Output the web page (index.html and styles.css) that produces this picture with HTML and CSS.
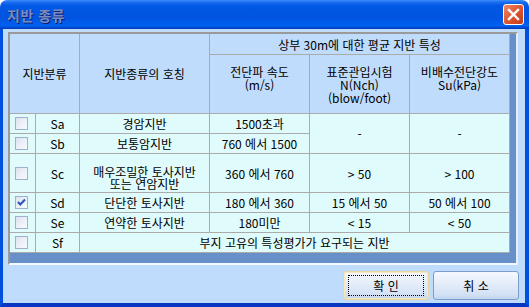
FILE: index.html
```html
<!DOCTYPE html>
<html lang="ko">
<head>
    <meta charset="UTF-8">
    <title>지반 종류</title>
    <link rel="stylesheet" href="styles.css">
</head>
<body>
    <div class="window">
        <div class="titlebar">
            <span class="title">지반 종류</span>
            <button class="close">
                <svg width="13" height="13" viewBox="0 0 13 13"><path d="M2 2 L11 11 M11 2 L2 11" stroke="#fff" stroke-width="2.4" stroke-linecap="square"/></svg>
            </button>
        </div>
        <div class="client">
            <div class="grid-frame">
                <div class="grid">
                    <!-- 헤더 -->
                    <div class="cell head h-class">지반분류</div>
                    <div class="cell head h-name">지반종류의 호칭</div>
                    <div class="cell head h-top">상부 30m에 대한 평균 지반 특성</div>
                    <div class="cell head h-sub">전단파 속도<br>(m/s)</div>
                    <div class="cell head h-sub">표준관입시험<br>N(Nch)<br>(blow/foot)</div>
                    <div class="cell head h-sub">비배수전단강도<br>Su(kPa)</div>

                    <!-- Sa -->
                    <div class="cell"><span class="chk"></span></div>
                    <div class="cell">Sa</div>
                    <div class="cell">경암지반</div>
                    <div class="cell">1500초과</div>
                    <div class="cell span-r2">-</div>
                    <div class="cell span-r2">-</div>

                    <!-- Sb -->
                    <div class="cell"><span class="chk"></span></div>
                    <div class="cell">Sb</div>
                    <div class="cell">보통암지반</div>
                    <div class="cell">760 에서 1500</div>

                    <!-- Sc -->
                    <div class="cell"><span class="chk"></span></div>
                    <div class="cell">Sc</div>
                    <div class="cell two-line">매우조밀한 토사지반<br>또는 연암지반</div>
                    <div class="cell">360 에서 760</div>
                    <div class="cell">&gt; 50</div>
                    <div class="cell">&gt; 100</div>

                    <!-- Sd -->
                    <div class="cell"><span class="chk checked"><svg width="11" height="11" viewBox="0 0 11 11"><path d="M2 5 L4.3 7.5 L9 2.5" fill="none" stroke="#2a55b8" stroke-width="2"/></svg></span></div>
                    <div class="cell">Sd</div>
                    <div class="cell">단단한 토사지반</div>
                    <div class="cell">180 에서 360</div>
                    <div class="cell">15 에서 50</div>
                    <div class="cell">50 에서 100</div>

                    <!-- Se -->
                    <div class="cell"><span class="chk"></span></div>
                    <div class="cell">Se</div>
                    <div class="cell">연약한 토사지반</div>
                    <div class="cell">180미만</div>
                    <div class="cell">&lt; 15</div>
                    <div class="cell">&lt; 50</div>

                    <!-- Sf -->
                    <div class="cell"><span class="chk"></span></div>
                    <div class="cell">Sf</div>
                    <div class="cell span-c4">부지 고유의 특성평가가 요구되는 지반</div>
                </div>
            </div>
            <div class="buttons">
                <button class="btn default"><span class="focus">확 인</span></button>
                <button class="btn">취 소</button>
            </div>
        </div>
    </div>
</body>
</html>
```

FILE: styles.css
```css
body {
    margin: 0;
    padding: 0;
    background-color: #fff;
    font-family: "Noto Sans CJK KR", "DejaVu Sans", sans-serif;
    font-size: 12px;
}
.window {
    width: 529px;
    height: 307px;
    display: flex;
    flex-direction: column;
    border-radius: 7px 7px 0 0;
    overflow: hidden;
}
.titlebar {
    height: 29px;
    flex-shrink: 0;
    display: flex;
    align-items: center;
    padding: 0 5px 0 7px;
    box-sizing: border-box;
    background: linear-gradient(to bottom, #3d8ff7 0%, #1a6cf0 8%, #0058e6 20%, #0054e0 60%, #0060f0 88%, #0048d0 96%, #0038b8 100%);
}
.title {
    font-weight: bold;
    font-size: 14px;
    color: #7c8cc0;
    text-shadow: 1px 1px 0 #0a1f70;
    letter-spacing: 0.5px;
}
.close {
    margin-left: auto;
    width: 21px;
    height: 21px;
    padding: 0;
    border: 1px solid #fff;
    border-radius: 3px;
    background: linear-gradient(135deg, #f08a68 0%, #e05a36 45%, #c23a14 100%);
    display: flex;
    align-items: center;
    justify-content: center;
}
.client {
    flex: 1;
    display: flex;
    flex-direction: column;
    background-color: #bfdcfd;
    border-left: 3px solid #0050e0;
    border-right: 4px solid #0050e0;
    border-bottom: 4px solid #0838c0;
}
.grid-frame {
    margin: 3px 0 0 5px;
    width: 510px;
    height: 233px;
    box-sizing: border-box;
    border-top: 2px solid #9a9a9a;
    border-left: 2px solid #9a9a9a;
    border-right: 2px solid #e8eef8;
    border-bottom: 2px solid #f4f8ff;
    background-color: #6890c8;
}
.grid {
    display: grid;
    grid-template-columns: 25px 43px 129px 99px 99px 99px;
    grid-template-rows: 20px 58px 19px 19px 38px 19px 19px 19px;
    gap: 1px;
    padding: 0 1px 1px 0;
    width: fit-content;
    background-color: #ababab;
}
.cell {
    background-color: #dffbfb;
    display: flex;
    align-items: center;
    justify-content: center;
    text-align: center;
    color: #000;
    white-space: nowrap;
}
.cell.head {
    background-color: #bfdcfd;
}
.h-class {
    grid-column: span 2;
    grid-row: span 2;
}
.h-name {
    grid-row: span 2;
}
.h-top {
    grid-column: span 3;
}
.h-sub {
    align-items: flex-start;
    padding-top: 10px;
    line-height: 13px;
}
.span-r2 {
    grid-row: span 2;
}
.span-c4 {
    grid-column: span 4;
}
.two-line {
    line-height: 12px;
    padding-top: 10px;
}
.chk {
    width: 13px;
    height: 13px;
    box-sizing: border-box;
    border: 1px solid #9fb1cf;
    background: linear-gradient(135deg, #dce3ef 0%, #eef2f9 60%, #f8fafd 100%);
    margin-right: 3px;
    display: flex;
    align-items: center;
    justify-content: center;
}
.buttons {
    display: flex;
    justify-content: flex-end;
    gap: 4px;
    margin-top: 6px;
    padding-right: 6px;
}
.btn {
    width: 86px;
    height: 29px;
    padding: 0;
    font-family: inherit;
    font-size: 12px;
    color: #000;
    border: 1px solid #7d9ccc;
    border-radius: 3px;
    background: linear-gradient(to bottom, #f4f8fe 0%, #e6eefa 40%, #d2e0f4 85%, #c0d4ee 100%);
    display: flex;
    align-items: center;
    justify-content: center;
}
.btn.default {
    border-color: #e6d6a0;
    box-shadow: inset 0 0 0 1px #f6e8b8;
}
.focus {
    width: 76px;
    height: 21px;
    box-sizing: border-box;
    border: 1px dotted #000;
    display: flex;
    align-items: center;
    justify-content: center;
}
```
